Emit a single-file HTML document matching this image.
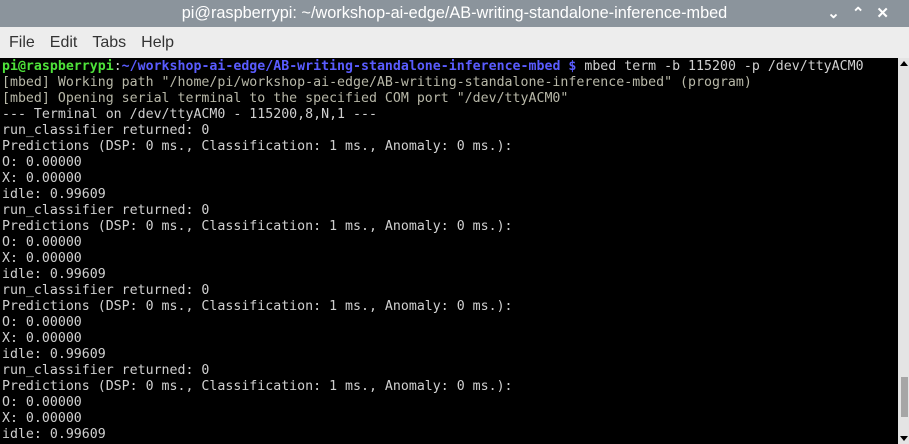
<!DOCTYPE html><html><head><style>
body{margin:0;width:909px;height:444px;overflow:hidden;background:#000;font-family:"Liberation Sans",sans-serif}
.t{position:absolute;left:0;top:0;width:909px;height:27px;background:#8b949c;color:#fff;font-size:16.3px;line-height:27px;text-align:center}
.m{position:absolute;left:0;top:27px;width:909px;height:31px;background:#ededed;color:#333;font-size:16px;line-height:31px}
.m span{margin-left:9px;margin-right:6px}
pre{position:absolute;left:2px;top:59px;margin:0;font-family:"DejaVu Sans Mono","Liberation Mono",monospace;font-size:13.25px;line-height:16px;color:#d0d0d0}
.g{color:#4ee23a;font-weight:bold}.b{color:#5a5cff;font-weight:bold}.y{color:#b8b8a8}
.sb{position:absolute;left:898px;top:58px;width:11px;height:386px;background:#e4e4e4}
.th{position:absolute;left:901px;top:377px;width:7px;height:40px;background:#a6a6a6}
</style></head><body>
<div class="t">pi@raspberrypi: ~/workshop-ai-edge/AB-writing-standalone-inference-mbed</div>
<div style="position:absolute;right:8px;top:0;color:#fff;font-size:15px;line-height:27px;font-weight:bold;letter-spacing:12px">⌄⌃✕</div>
<div class="m"><span>File</span><span>Edit</span><span>Tabs</span><span>Help</span></div>
<pre><span class="g">pi@raspberrypi</span>:<span class="b">~/workshop-ai-edge/AB-writing-standalone-inference-mbed $</span> mbed term -b 115200 -p /dev/ttyACM0
<span class="y">[mbed] Working path "/home/pi/workshop-ai-edge/AB-writing-standalone-inference-mbed" (program)
[mbed] Opening serial terminal to the specified COM port "/dev/ttyACM0"</span>
--- Terminal on /dev/ttyACM0 - 115200,8,N,1 ---
run_classifier returned: 0
Predictions (DSP: 0 ms., Classification: 1 ms., Anomaly: 0 ms.):
O: 0.00000
X: 0.00000
idle: 0.99609
run_classifier returned: 0
Predictions (DSP: 0 ms., Classification: 1 ms., Anomaly: 0 ms.):
O: 0.00000
X: 0.00000
idle: 0.99609
run_classifier returned: 0
Predictions (DSP: 0 ms., Classification: 1 ms., Anomaly: 0 ms.):
O: 0.00000
X: 0.00000
idle: 0.99609
run_classifier returned: 0
Predictions (DSP: 0 ms., Classification: 1 ms., Anomaly: 0 ms.):
O: 0.00000
X: 0.00000
idle: 0.99609</pre>
<div class="sb"></div><div class="th"></div>
<div style="position:absolute;left:900px;top:61px;width:0;height:0;border-left:4px solid transparent;border-right:4px solid transparent;border-bottom:5px solid #000"></div>
<div style="position:absolute;left:900px;top:436px;width:0;height:0;border-left:4px solid transparent;border-right:4px solid transparent;border-top:5px solid #000"></div>
</body></html>
